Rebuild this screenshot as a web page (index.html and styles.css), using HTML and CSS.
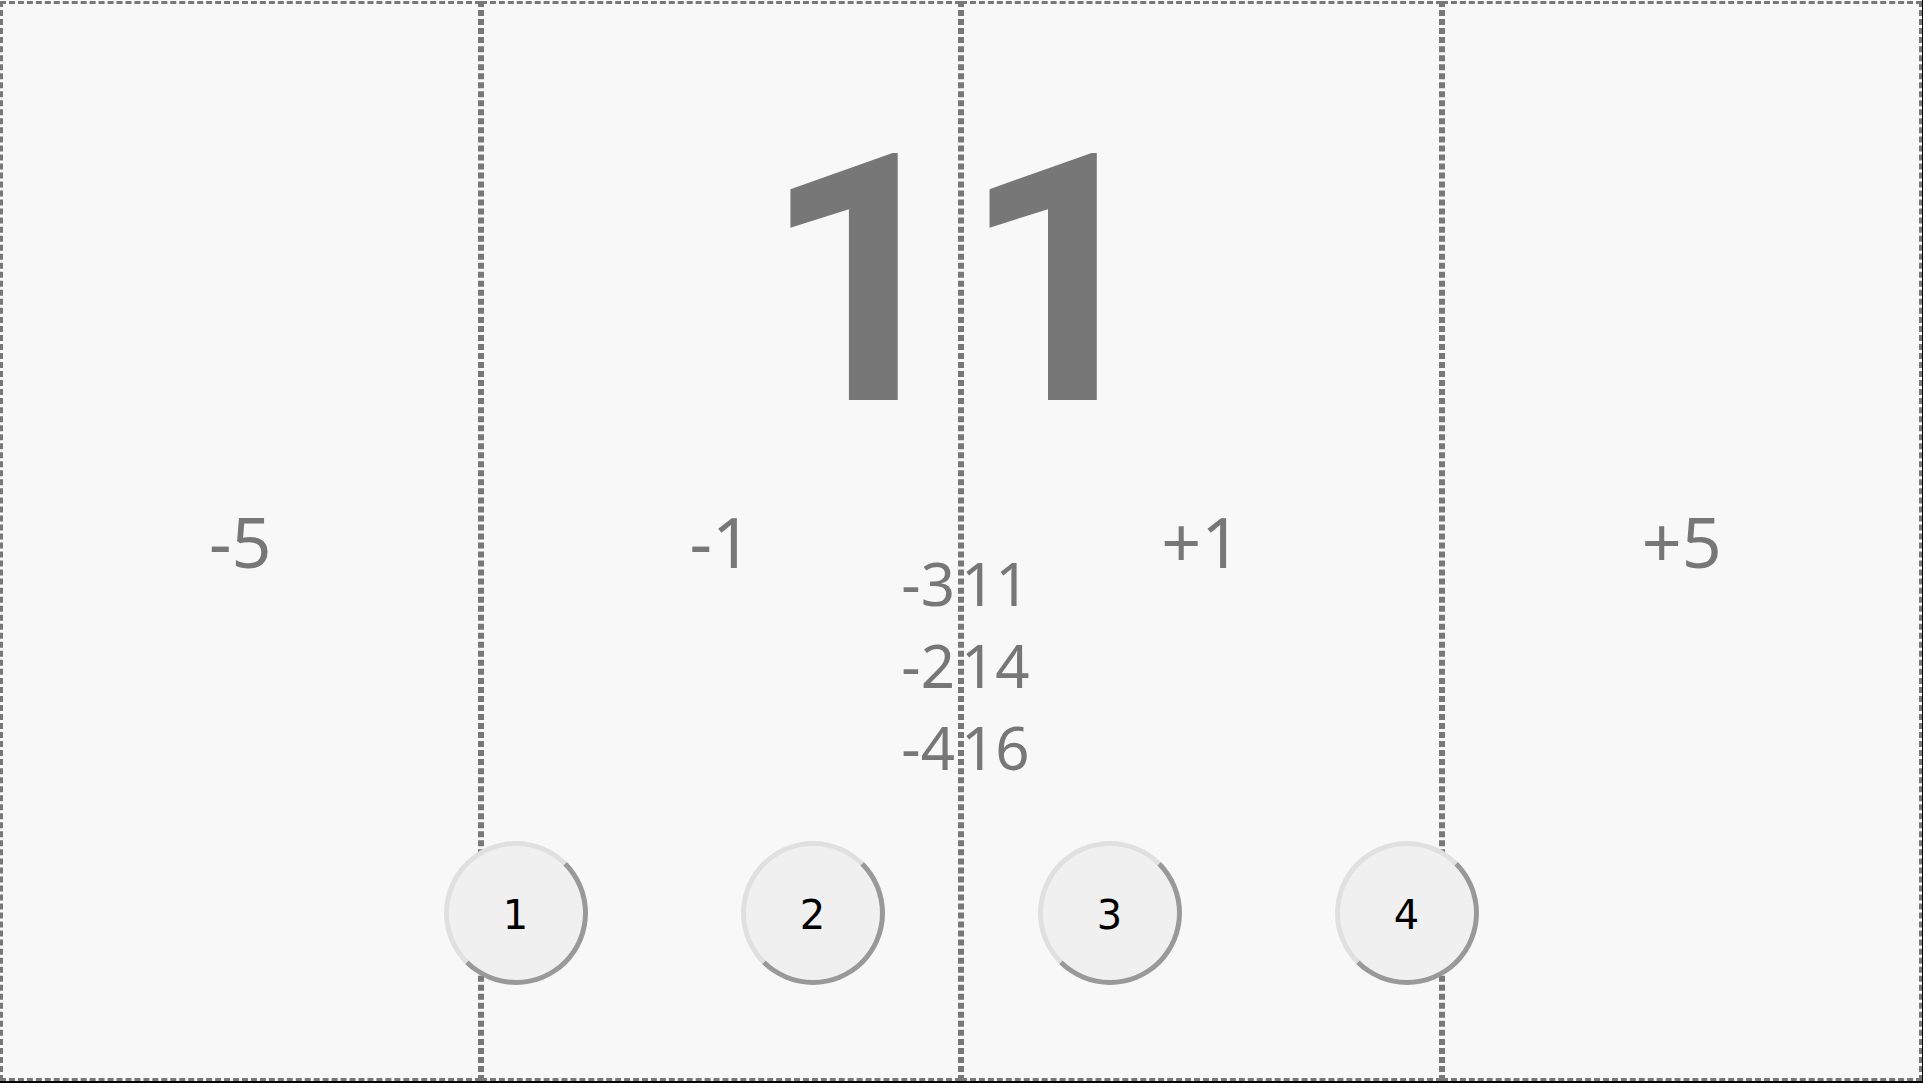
FILE: index.html
```html
<!DOCTYPE html>
<html lang="en">
<head>
  <meta charset="UTF-8">
  <title>Counter</title>
  <link rel="stylesheet" href="styles.css">
</head>
<body>

  <div class="page">
    <div class="board">

      <!-- tap zones -->
      <div class="zone">-5</div>
      <div class="zone">-1</div>
      <div class="zone">+1</div>
      <div class="zone">+5</div>

      <!-- current total -->
      <div class="count">11</div>

      <!-- recent changes -->
      <div class="history">
        <span class="delta">-3</span><span class="total">11</span>
        <span class="delta">-2</span><span class="total">14</span>
        <span class="delta">-4</span><span class="total">16</span>
      </div>

      <!-- players -->
      <div class="players">
        <div class="player">1</div>
        <div class="player">2</div>
        <div class="player">3</div>
        <div class="player">4</div>
      </div>

    </div>
  </div>

</body>
</html>
```

FILE: styles.css
```css
html {
  background-color: #000;
}

body {
  margin: 0;
  font-family: "Noto Sans", "Open Sans", sans-serif;
}

.page {
  width: 1922px;
  height: 1081px;
  padding-top: 1px;
  box-sizing: border-box;
  background-color: #f8f8f8;
}

.board {
  position: relative;
  display: flex;
  height: 1080px;
}

/* tap zones */
.zone {
  flex: 1;
  display: flex;
  align-items: center;
  justify-content: center;
  border: 3px dashed #787878;
  color: #777;
  font-size: 70px;
}

/* big number */
.count {
  position: absolute;
  top: 77px;
  left: 0;
  right: 0;
  text-align: center;
  font-family: Roboto, sans-serif;
  font-size: 347px;
  font-weight: bold;
  color: #777;
  line-height: normal;
  pointer-events: none;
}

/* history list */
.history {
  position: absolute;
  top: 541px;
  left: 0;
  right: 0;
  display: grid;
  grid-template-columns: 1fr 1fr;
  font-size: 60px;
  color: #777;
  pointer-events: none;
}

.delta {
  text-align: right;
  padding-right: 6px;
}

.total {
  text-align: left;
}

/* player circles */
.players {
  position: absolute;
  top: 840px;
  left: 0;
  right: 0;
  display: flex;
  justify-content: center;
  gap: 153px;
}

.player {
  width: 144px;
  height: 144px;
  box-sizing: border-box;
  padding-top: 3px;
  border: 5px solid #e0e0e0;
  border-right-color: #999;
  border-bottom-color: #999;
  border-radius: 50%;
  background-color: #f0f0f0;
  display: flex;
  align-items: center;
  justify-content: center;
  font-family: "DejaVu Sans", sans-serif;
  font-size: 40px;
  color: #000;
}
```
